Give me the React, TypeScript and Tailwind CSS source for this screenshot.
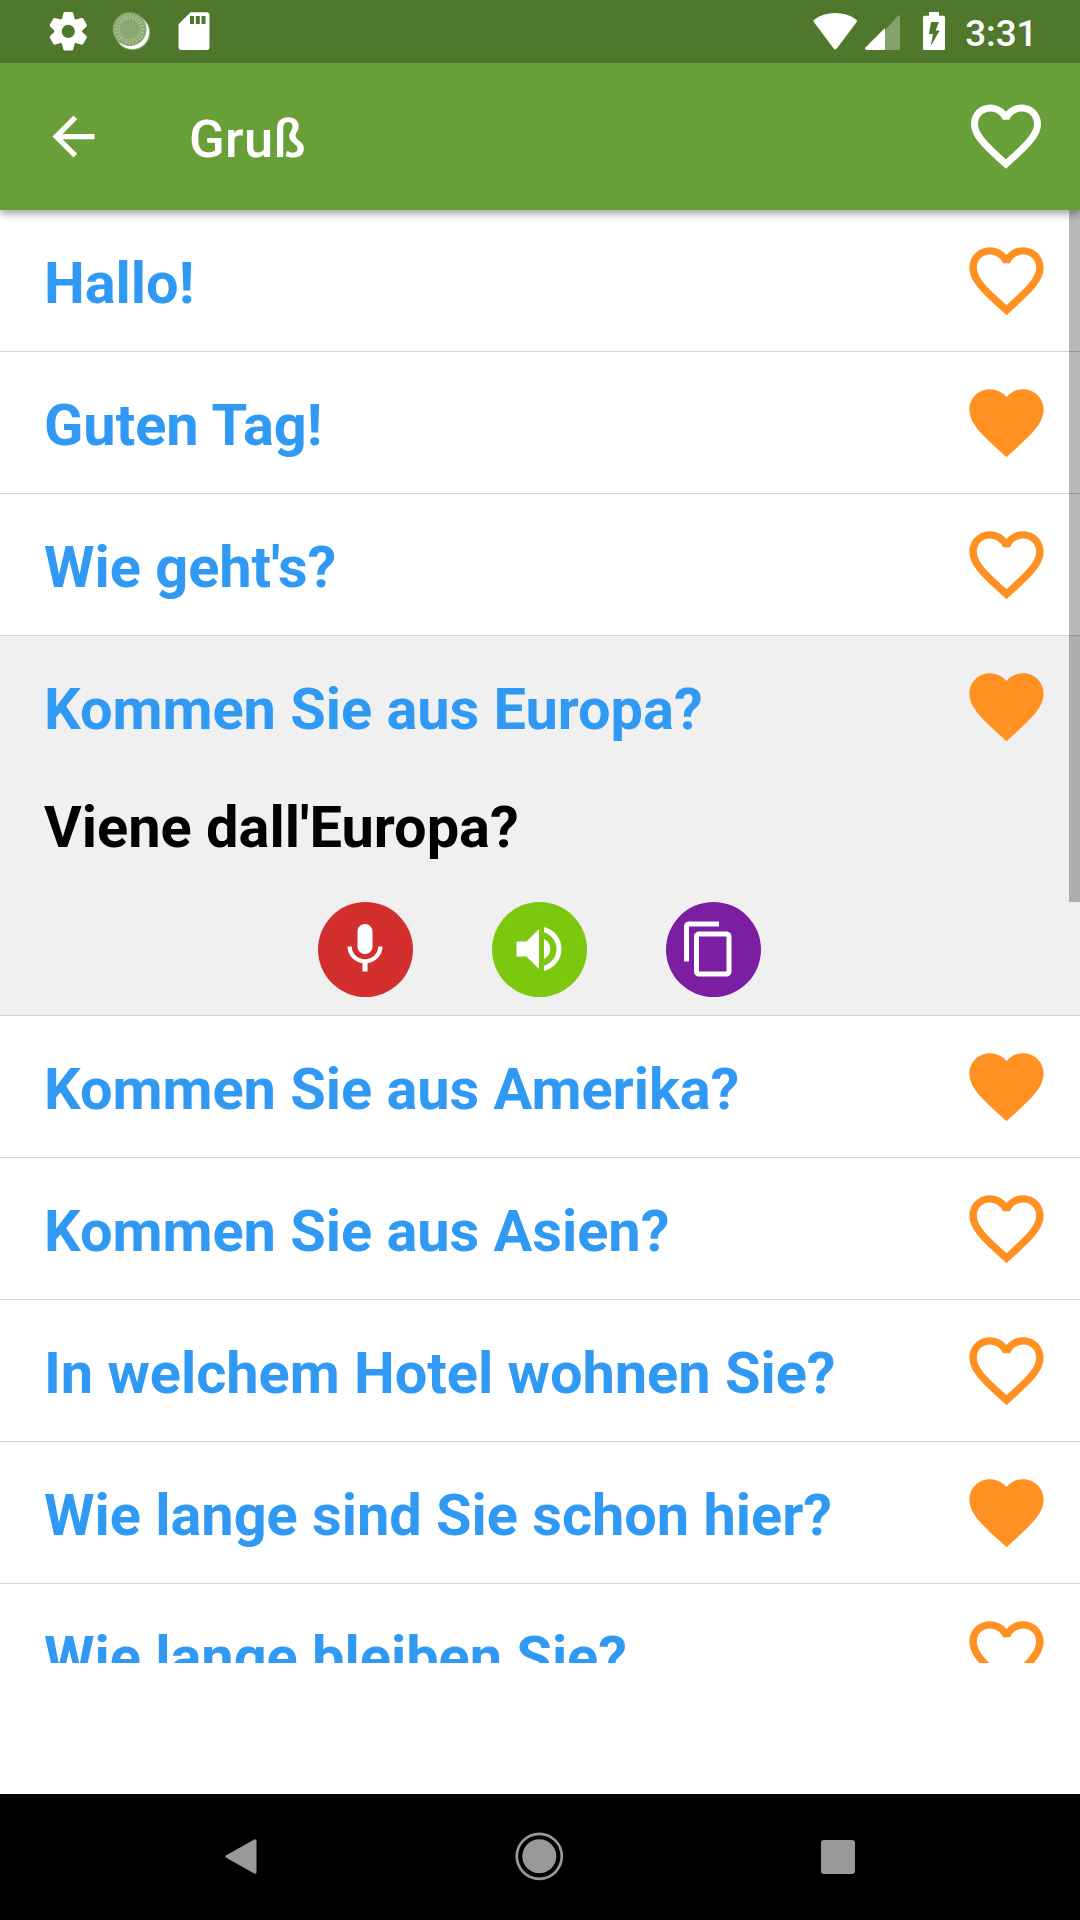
import React from "react";

const HEART =
  "M12 21.35l-1.45-1.32C5.4 15.36 2 12.28 2 8.5 2 5.42 4.42 3 7.5 3c1.74 0 3.41.81 4.5 2.09C13.09 3.81 14.76 3 16.5 3 19.58 3 22 5.42 22 8.5c0 3.78-3.4 6.86-8.55 11.54L12 21.35z";
const HEART_OUTLINE =
  "M16.5 3c-1.74 0-3.41.81-4.5 2.09C10.91 3.81 9.24 3 7.5 3 4.42 3 2 5.42 2 8.5c0 3.78 3.4 6.86 8.55 11.54L12 21.35l1.45-1.32C18.6 15.36 22 12.28 22 8.5 22 5.42 19.58 3 16.5 3zm-4.4 15.55l-.1.1-.1-.1C7.14 14.24 4 11.39 4 8.5 4 6.5 5.5 5 7.5 5c1.54 0 3.04.99 3.57 2.36h1.87C13.46 5.99 14.96 5 16.5 5c2 0 3.5 1.5 3.5 3.5 0 2.89-3.14 5.74-7.9 10.05z";
const MIC =
  "M12 14c1.66 0 3-1.34 3-3V5c0-1.66-1.34-3-3-3S9 3.34 9 5v6c0 1.66 1.34 3 3 3zm5.3-3c0 3-2.54 5.1-5.3 5.1S6.7 14 6.7 11H5c0 3.41 2.72 6.23 6 6.72V21h2v-3.28c3.28-.48 6-3.3 6-6.72h-1.7z";
const VOLUME =
  "M3 9v6h4l5 5V4L7 9H3zm13.5 3c0-1.77-1.02-3.29-2.5-4.03v8.05c1.48-.73 2.5-2.25 2.5-4.02zM14 3.23v2.06c2.89.86 5 3.54 5 6.71s-2.11 5.85-5 6.71v2.06c4.01-.91 7-4.49 7-8.77s-2.99-7.86-7-8.77z";
const COPY =
  "M16 1H4c-1.1 0-2 .9-2 2v14h2V3h12V1zm3 4H8c-1.1 0-2 .9-2 2v14c0 1.1.9 2 2 2h11c1.1 0 2-.9 2-2V7c0-1.1-.9-2-2-2zm0 16H8V7h11v14z";
const BACK = "M20 11H7.83l5.59-5.59L12 4l-8 8 8 8 1.41-1.41L7.83 13H20v-2z";

function Icon({ d, className }: { d: string; className: string }) {
  return (
    <svg viewBox="0 0 24 24" fill="currentColor" className={className}>
      <path d={d} />
    </svg>
  );
}

const SPOKES = Array.from({ length: 24 }, (_, i) => i * 15);
const TEETH = [0, 60, 120, 180, 240, 300];

function StatusBar() {
  return (
    <div className="flex h-[63px] items-start justify-between bg-[#50782c] pt-2">
      <div className="flex pl-[44px]">
        <svg viewBox="0 0 48 48" className="h-12 w-12" fill="#fff">
          <circle cx="24.3" cy="23.3" r="10.2" fill="none" stroke="#fff" strokeWidth="7.2" />
          {TEETH.map((a) => (
            <path
              key={a}
              d="M17.500 12.500L19.300 5.500Q19.600 4 21 4H27.600Q29 4 29.300 5.500L31.100 12.500Q24.300 9.500 17.500 12.500z"
              transform={`rotate(${a} 24.3 23.3)`}
            />
          ))}
        </svg>
        <svg viewBox="0 0 48 48" className="ml-[14px] h-12 w-12">
          <circle cx="26.6" cy="24.6" r="17.6" fill="#8aa873" />
          <circle cx="26.2" cy="24.2" r="16.9" fill="#fff" />
          <circle cx="23.6" cy="21.2" r="16.9" fill="#8aa873" />
          <g stroke="#abc08c" strokeWidth="1.4">
            {SPOKES.map((a) => (
              <path key={a} d="M23.6 6V11.3" transform={`rotate(${a} 23.6 21.2)`} />
            ))}
          </g>
        </svg>
        <svg viewBox="0 0 48 48" className="ml-[16px] h-12 w-12" fill="#fff">
          <path
            fillRule="evenodd"
            d="M20.5 4.3H36.5q3 0 3 3V39q0 3-3 3H11.5q-3 0-3-3V16.3zM20 8v8h4V8zM25.8 8v8h4V8zM31.5 8v8h4V8z"
          />
        </svg>
      </div>
      <div className="flex pr-[42.5px] text-white">
        <svg viewBox="0 0 48 48" className="h-12 w-12" fill="#fff">
          <path d="M2 14.200Q.8 12.600 2.400 11.400C14.500 3 32 3 44.100 11.400Q45.700 12.600 44.500 14.200L25 40.200Q23.200 42.200 21.500 40.200z" />
        </svg>
        <svg viewBox="-2 0 48 48" className="ml-1 h-12 w-12" fill="#fff">
          <path opacity=".3" d="M19 22L31.500 8.200Q34 6 34 9V40.500Q34 42 32.500 42H19z" />
          <path d="M19 20V42H.6Q-2 41.500 -.4 39.300z" />
        </svg>
        <svg viewBox="0 0 24 48" className="ml-[10px] h-12 w-6" fill="#fff">
          <path
            fillRule="evenodd"
            d="M7 4H17V7.800H21.500Q23 7.800 23 9.300V40.500Q23 42 21.500 42H2.500Q1 42 1 40.500V9.300Q1 7.800 2.500 7.800H7zM9 14L7 26H11L8.700 38L17.700 22.500H13.600L17 14z"
          />
        </svg>
        <div className="ml-[19px] pt-[4px] text-[36.75px] leading-[43px] font-medium">3:31</div>
      </div>
    </div>
  );
}

function Phrase({ text, fav, children }: { text: string; fav: boolean; children?: React.ReactNode }) {
  return (
    <div className={children ? "border-b border-[#d2d2d2] bg-[#f0f0f0]" : "border-b border-[#d2d2d2]"}>
      <div className="flex h-[141px] items-start justify-between pr-[29px] pl-[44px]">
        <div className="pt-[39px] text-[57.75px] leading-[68px] font-bold tracking-[-0.04px] whitespace-nowrap text-[#2f99f3]">
          {text}
        </div>
        <Icon d={fav ? HEART : HEART_OUTLINE} className="mt-[26px] h-[89px] w-[89px] text-[#ff9122]" />
      </div>
      {children}
    </div>
  );
}

export default function App() {
  return (
    <div className="flex h-[1920px] w-[1080px] flex-col overflow-hidden bg-white font-['Roboto',sans-serif]">
      <StatusBar />
      <header className="relative z-10 flex h-[147px] shrink-0 items-center bg-[#689f38] pr-8 pl-[42px] text-white shadow-[0_4px_8px_rgba(0,0,0,0.35)]">
        <Icon d={BACK} className="h-[63px] w-[63px]" />
        <h1 className="ml-[84px] flex-1 pt-[5px] text-[52.5px] leading-[62px] font-medium tracking-[0.3px]">Gruß</h1>
        <Icon d={HEART_OUTLINE} className="mb-[2px] h-[84px] w-[84px]" />
      </header>
      <main className="relative h-[1453px] shrink-0 overflow-hidden">
        <Phrase text="Hallo!" fav={false} />
        <Phrase text="Guten Tag!" fav />
        <Phrase text="Wie geht's?" fav={false} />
        <Phrase text="Kommen Sie aus Europa?" fav>
          <div className="h-[238px] pt-4">
            <div className="pl-[44px] text-[57.75px] leading-[68px] font-bold text-black">Viene dall'Europa?</div>
            <div className="mt-[41px] flex justify-center gap-[79.5px] pr-[1.5px]">
              <div className="flex h-[94.5px] w-[94.5px] items-center justify-center rounded-full bg-[#d32f2f] text-white">
                <Icon d={MIC} className="h-[60px] w-[60px]" />
              </div>
              <div className="flex h-[94.5px] w-[94.5px] items-center justify-center rounded-full bg-[#7cc80e] text-white">
                <Icon d={VOLUME} className="h-[60px] w-[60px]" />
              </div>
              <div className="flex h-[94.5px] w-[94.5px] items-center justify-center rounded-full bg-[#7b1fa2] pr-[9px] text-white">
                <Icon d={COPY} className="h-[60px] w-[60px]" />
              </div>
            </div>
          </div>
        </Phrase>
        <Phrase text="Kommen Sie aus Amerika?" fav />
        <Phrase text="Kommen Sie aus Asien?" fav={false} />
        <Phrase text="In welchem Hotel wohnen Sie?" fav={false} />
        <Phrase text="Wie lange sind Sie schon hier?" fav />
        <Phrase text="Wie lange bleiben Sie?" fav={false} />
        <div className="absolute top-0 right-0 h-[692px] w-[11px] bg-black/28" />
      </main>
      <nav className="mt-auto flex h-[126px] shrink-0 items-center justify-between bg-black pr-[225px] pl-[225px] text-[#999]">
        <svg viewBox="0 0 34 48" className="h-12 w-[34px]" fill="currentColor">
          <path d="M1.200 22.300L28.800 6.800Q31.500 5.500 31.500 8V39Q31.500 41.500 28.800 40.200L1.200 24.800Q-.5 23.500 1.200 22.300z" />
        </svg>
        <svg viewBox="0 0 50 50" className="h-[50px] w-[50px]" fill="currentColor">
          <circle cx="24.3" cy="24.3" r="17" />
          <circle cx="24.3" cy="24.3" r="22.500" fill="none" stroke="currentColor" strokeWidth="2.700" />
        </svg>
        <div className="h-[34px] w-[34px] rounded-[3px] bg-[#999]" />
      </nav>
    </div>
  );
}
